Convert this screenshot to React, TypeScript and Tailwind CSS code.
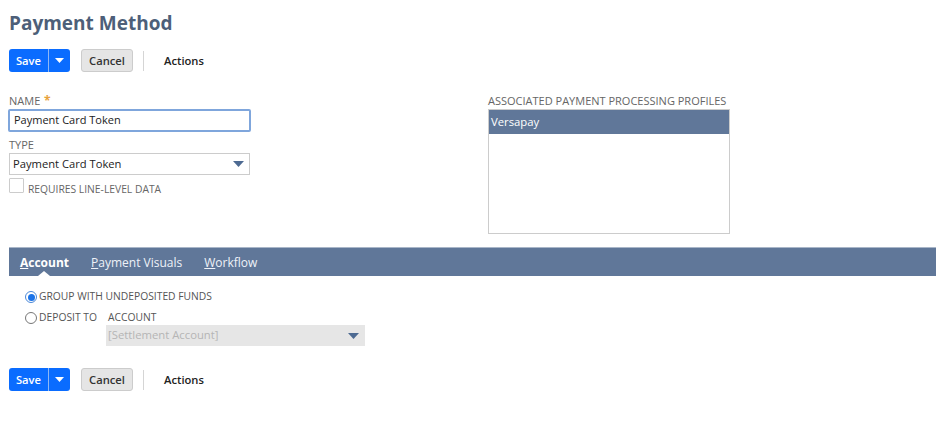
import React from "react";

const Caret = ({ color = "#4d6a92" }: { color?: string }) => (
  <svg width="11" height="6" viewBox="0 0 11 6">
    <path d="M0 0 H11 L5.5 6 Z" fill={color} />
  </svg>
);

const Toolbar = () => (
  <div className="flex items-center h-[23px]">
    <div className="flex h-[23px] rounded-[3px] bg-[#0a6cff] overflow-hidden">
      <button className="w-[39px] h-full text-white text-[11.2px] font-semibold leading-none">Save</button>
      <div className="w-px h-full bg-[#8fb8f5]" />
      <button className="w-[21px] h-full flex items-center justify-center">
        <svg width="9" height="5" viewBox="0 0 9 5">
          <path d="M0 0 H9 L4.5 5 Z" fill="#fff" />
        </svg>
      </button>
    </div>
    <button className="ml-[11px] w-[52px] h-[23px] rounded-[3px] bg-[#e5e5e5] border border-[#cccccc] text-[11.2px] font-semibold text-[#333] leading-none">
      Cancel
    </button>
    <div className="ml-[10px] w-px h-[20px] bg-[#d5d5d5]" />
    <span className="ml-[20px] mt-[2px] text-[11.2px] font-semibold text-[#222]">Actions</span>
  </div>
);

export default function App() {
  return (
    <div className="w-[936px] h-[438px] bg-white text-[#333]" style={{ fontFamily: '"Open Sans", sans-serif' }}>
      <div className="pl-[9px] pt-[9px]">
        <h1 className="text-[19px] leading-[29px] font-bold text-[#4d5f79]">Payment Method</h1>
        <div className="mt-[11px]">
          <Toolbar />
        </div>
        <div className="flex mt-[22px]">
          <div className="w-[242px]">
            <div className="text-[11px] leading-[14px] text-[#666] uppercase">
              Name <span className="text-[#e8a23b] text-[12px] font-bold ml-[1px]">*</span>
            </div>
            <div className="mt-[1px] -ml-[1px] w-[243px] h-[23px] border-2 border-[#7fa6dc] rounded-[2px] flex items-center pl-[4px] text-[11px] text-[#222]">
              Payment Card Token
            </div>
            <div className="mt-[6px] text-[11px] leading-[14px] text-[#666] uppercase">Type</div>
            <div className="mt-[1px] w-[241px] h-[22px] border border-[#cccccc] flex items-center justify-between pl-[3px] pr-[5px] text-[11.2px] text-[#222]">
              <span>Payment Card Token</span>
              <Caret />
            </div>
            <div className="mt-[3px] flex items-start">
              <div className="w-[15px] h-[15px] border border-[#cccccc] rounded-[1px]" />
              <span className="ml-[4px] mt-[4px] leading-[14px] text-[10.3px] text-[#666] uppercase">Requires line-level data</span>
            </div>
          </div>
          <div className="ml-[237px] w-[242px]">
            <div className="text-[11px] leading-[14px] text-[#666] uppercase">Associated payment processing profiles</div>
            <div className="mt-[1px] w-[242px] h-[125px] border border-[#cccccc]">
              <div className="h-[24px] bg-[#607799] text-white text-[11.3px] flex items-center pl-[2px]">Versapay</div>
            </div>
          </div>
        </div>
        <div className="mt-[13px] h-[29px] bg-[#607799] border-t border-[#a9b6c8] relative">
          <div className="flex items-center h-full pl-[11px] pt-[2px] text-[12px] text-white gap-[22px]">
            <span className="font-bold">
              <span className="underline">A</span>ccount
            </span>
            <span className="text-[#eef2f8]">
              <span className="underline">P</span>ayment Visuals
            </span>
            <span className="text-[#eef2f8]">
              <span className="underline">W</span>orkflow
            </span>
          </div>
          <span className="absolute bottom-0 left-[29px] w-0 h-0 border-l-[6px] border-r-[6px] border-b-[5px] border-l-transparent border-r-transparent border-b-white" />
        </div>
        <div className="pl-[16px] pt-[14px]">
          <div className="flex items-center h-[14px]">
            <div className="w-[12px] h-[12px] rounded-full border border-[#4a88d8] flex items-center justify-center">
              <div className="w-[7px] h-[7px] rounded-full bg-[#1a73e8]" />
            </div>
            <span className="ml-[2px] text-[10.3px] text-[#555] uppercase">Group with undeposited funds</span>
          </div>
          <div className="flex items-center h-[14px] mt-[7px]">
            <div className="w-[12px] h-[12px] rounded-full border border-[#777]" />
            <span className="ml-[2px] text-[10.3px] text-[#555] uppercase">Deposit to</span>
            <span className="ml-[11px] text-[10.3px] text-[#555] uppercase">Account</span>
          </div>
          <div className="ml-[81px] mt-[0px] w-[259px] h-[21px] bg-[#e6e6e6] flex items-center justify-between pl-[2px] pr-[6px] text-[11.3px] text-[#b5b5b5]">
            <span>[Settlement Account]</span>
            <Caret />
          </div>
        </div>
        <div className="mt-[22px]">
          <Toolbar />
        </div>
      </div>
    </div>
  );
}
